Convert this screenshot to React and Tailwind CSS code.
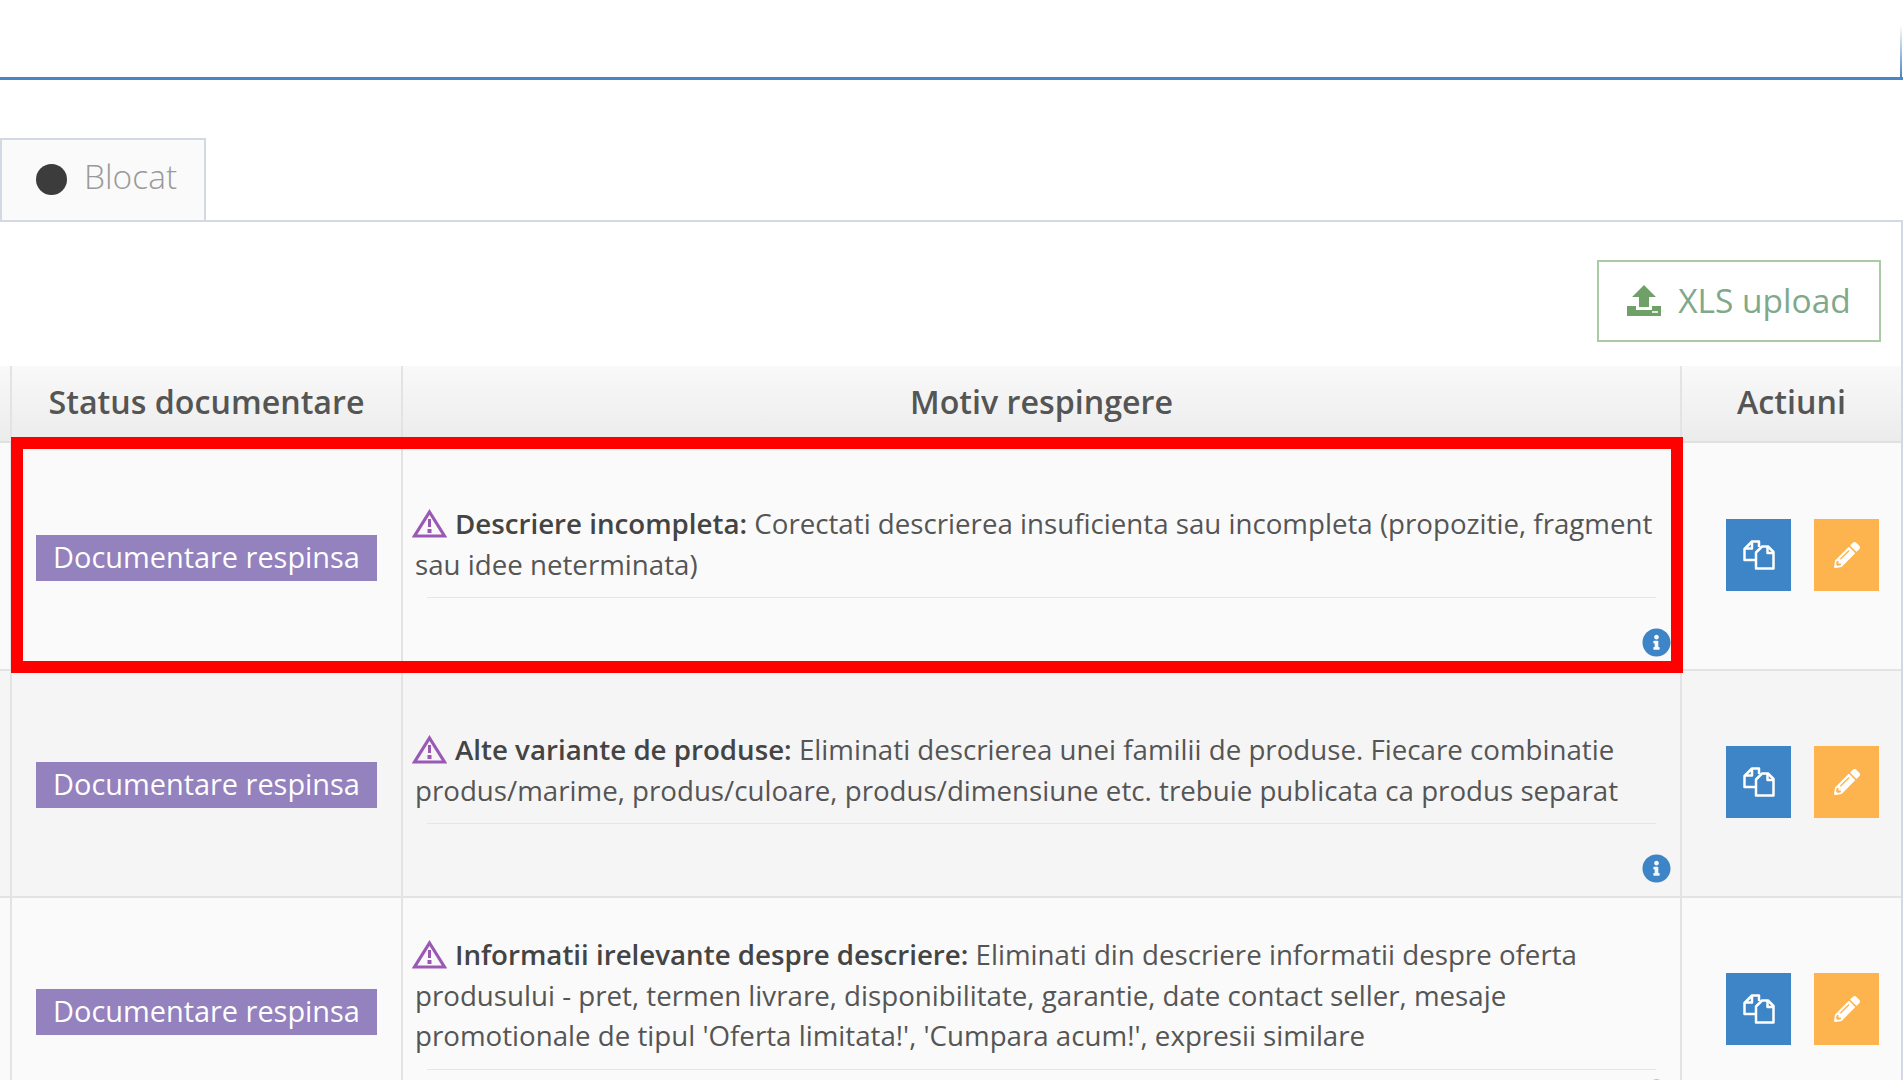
import { FaInfoCircle, FaPencilAlt } from 'react-icons/fa';

const rows = [
    {
        title: 'Descriere incompleta:',
        text: 'Corectati descrierea insuficienta sau incompleta (propozitie, fragment sau idee neterminata)',
        rowClass: 'h-[228px] bg-[#fafafa]',
        cellClass: 'pt-[60px]',
        infoClass: 'mt-[30px]',
    },
    {
        title: 'Alte variante de produse:',
        text: 'Eliminati descrierea unei familii de produse. Fiecare combinatie produs/marime, produs/culoare, produs/dimensiune etc. trebuie publicata ca produs separat',
        rowClass: 'h-[227px] bg-[#f5f5f5]',
        cellClass: 'pt-[58px]',
        infoClass: 'mt-[30px]',
    },
    {
        title: 'Informatii irelevante despre descriere:',
        text: "Eliminati din descriere informatii despre oferta produsului - pret, termen livrare, disponibilitate, garantie, date contact seller, mesaje promotionale de tipul 'Oferta limitata!', 'Cumpara acum!', expresii similare",
        rowClass: 'h-[227px] bg-[#fafafa]',
        cellClass: 'pt-[36px]',
        infoClass: 'mt-[9px]',
    },
];

const WarnIcon = () => (
    <svg width="35" height="29" viewBox="0 0 35 29" className="mr-[8px] -ml-[3px] inline-block -translate-y-[3px] align-middle">
        <path d="M17.5 3 L32.5 27 L2.5 27 Z" fill="none" stroke="#9b59b6" strokeWidth="3.2" strokeLinejoin="miter" />
        <path d="M17.5 10 L17.5 18" stroke="#9b59b6" strokeWidth="3" />
        <rect x="15.5" y="20" width="4" height="4" fill="#9b59b6" />
    </svg>
);

const CopyIcon = () => (
    <svg width="32" height="30" viewBox="0 0 32 30" fill="none" stroke="#fff" strokeWidth="2.5" strokeLinejoin="round">
        <path d="M16 7 L16 1.5 L9 1.5 L1.5 9 L1.5 20 L12 20" />
        <path d="M9 1.5 L9 8.5 L2 8.5" />
        <path d="M19 6.5 L25 6.5 L30.5 12 L30.5 28.5 L13 28.5 L13 12.5 Z" />
        <path d="M24.5 6.5 L24.5 13 L30.5 13" />
    </svg>
);

const UploadIcon = () => (
    <svg width="34" height="31" viewBox="0 0 34 31" fill="#6fa068">
        <path d="M17 0 L29 12 L22 12 L22 22 L12 22 L12 12 L5 12 Z" />
        <path d="M0 21 L9 21 L9 25 L25 25 L25 21 L34 21 L34 31 L0 31 Z" />
        <rect x="25" y="26" width="6" height="2" fill="#dfe9dc" />
    </svg>
);

const Row = ({ row }) => (
    <div className={`grid grid-cols-[12px_391px_1279px_1fr] border-b-2 border-[#e3e3e3] ${row.rowClass}`}>
        <div className="border-r-2 border-[#e3e3e3]" />
        <div className="flex items-center justify-center border-r-2 border-[#e3e3e3] pt-[3px]">
            <span className="flex h-[46px] w-[341px] items-center justify-center bg-[#9382bd] pb-[2px] text-[28.9px] text-white">
                Documentare respinsa
            </span>
        </div>
        <div className={`flex flex-col border-r-2 border-[#e3e3e3] pl-[12px] pr-[14px] ${row.cellClass}`}>
            <p className="text-[27.7px] leading-[40.7px] text-[#555]">
                <WarnIcon />
                <strong className="font-semibold text-[#444]">{row.title}</strong> {row.text}
            </p>
            <div className="ml-[12px] mr-[10px] mt-[13px] border-b border-[#e6e6e6]" />
            <div className={`-mr-[5px] flex justify-end ${row.infoClass}`}>
                <FaInfoCircle className="h-[29px] w-[29px] text-[#3d85c6]" />
            </div>
        </div>
        <div className="flex items-center gap-[23px] pb-[3px] pl-[44px]">
            <button className="flex h-[72px] w-[65px] items-center justify-center bg-[#3d85c6]">
                <CopyIcon />
            </button>
            <button className="flex h-[72px] w-[65px] items-center justify-center bg-[#fdb44f]">
                <FaPencilAlt className="h-[26px] w-[26px] text-white" />
            </button>
        </div>
    </div>
);

const App = () => {
    return (
        <div className="h-[1080px] w-full overflow-hidden bg-white font-['Open_Sans',sans-serif]">
            {/* top box, only its bottom edge is visible */}
            <div className="flex h-[80px] justify-end border-b-[3px] border-[#4a86c5] pr-[1px]">
                <div className="mt-[25px] w-[2px] bg-gradient-to-b from-transparent to-[#4a86c5]" />
            </div>

            {/* tab */}
            <div className="mt-[58px] flex">
                <div className="flex h-[82px] w-[206px] items-center gap-[17px] border-2 border-b-0 border-[#d3d8e4] bg-[#fafafa] pb-[7px] pl-[34px]">
                    <span className="mt-[5px] h-[31px] w-[31px] rounded-full bg-[#3c3c3c]" />
                    <span className="text-[33.5px] font-light text-[#999]">Blocat</span>
                </div>
            </div>

            {/* panel */}
            <div className="border-r-2 border-t-2 border-[#d3d8e4] bg-white">
                <div className="flex justify-end pb-[24px] pr-[20px] pt-[38px]">
                    <button className="flex h-[82px] w-[284px] items-center justify-center gap-[17px] border-2 border-[#a9cba6] pb-[2px] text-[33.5px] text-[#7fa98a]">
                        <UploadIcon />
                        XLS upload
                    </button>
                </div>

                <div className="grid h-[77px] grid-cols-[12px_391px_1279px_1fr] border-b-2 border-[#e0e0e0] bg-gradient-to-b from-[#f9f9f9] to-[#ececec] pb-[3px] text-[32.2px] font-semibold text-[#555]">
                    <div className="border-r-2 border-[#e3e3e3]" />
                    <div className="flex items-center justify-center border-r-2 border-[#e3e3e3]">Status documentare</div>
                    <div className="flex items-center justify-center border-r-2 border-[#e3e3e3]">Motiv respingere</div>
                    <div className="flex items-center justify-center">Actiuni</div>
                </div>

                <div className="relative">
                    {/* red highlight over the first row */}
                    <div className="absolute left-[11px] top-[-6px] z-10 h-[236px] w-[1672px] border-[12px] border-[#ff0000]" />
                    {rows.map((row) => (
                        <Row key={row.title} row={row} />
                    ))}
                </div>
            </div>
        </div>
    );
};

export default App;
